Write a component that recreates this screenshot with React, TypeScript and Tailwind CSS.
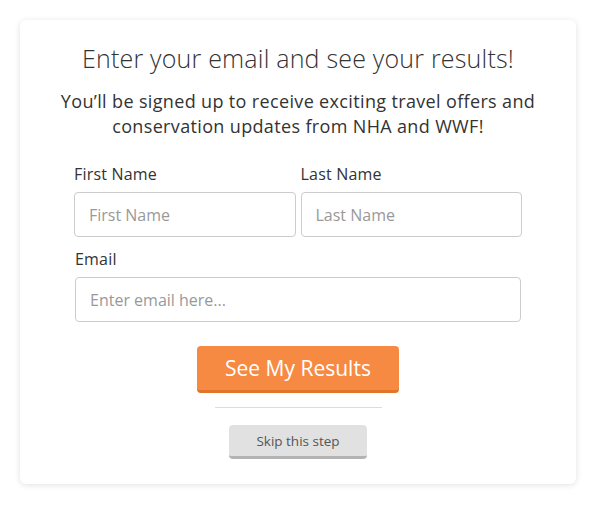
import React from "react";

export default function App() {
  return (
    <div className="w-[600px] h-[507px] bg-white pt-5 pl-5" style={{ fontFamily: "'Open Sans', Lato, sans-serif" }}>
      <div className="w-[556px] h-[464px] rounded-md bg-white shadow-[0_1px_6px_rgba(0,0,0,0.12)] flex flex-col items-center pt-[23px] px-[54px]">
        <h1 className="text-[25px] leading-[30px] font-light tracking-[0.2px] text-[#333] text-center">Enter your email and see your results!</h1>
        <p className="mt-[16px] whitespace-nowrap text-[18px] leading-[25px] tracking-[0.35px] text-[#333] text-center">
          You’ll be signed up to receive exciting travel offers and<br />conservation updates from NHA and WWF!
        </p>
        <div className="w-full mt-[25px] grid grid-cols-2 gap-x-[5px]">
          <div className="flex flex-col">
            <label className="text-[16px] leading-[20px] tracking-[0.2px] text-[#333]">First Name</label>
            <input placeholder="First Name" className="mt-[8px] h-[45px] border border-[#ccc] rounded-[4px] px-[14px] text-[16px] placeholder:text-[#999] outline-none" />
          </div>
          <div className="flex flex-col">
            <label className="text-[16px] leading-[20px] tracking-[0.2px] text-[#333]">Last Name</label>
            <input placeholder="Last Name" className="mt-[8px] h-[45px] border border-[#ccc] rounded-[4px] px-[14px] text-[16px] placeholder:text-[#999] outline-none" />
          </div>
        </div>
        <div className="w-full flex flex-col mt-[12px] px-px">
          <label className="text-[16px] leading-[20px] tracking-[0.2px] text-[#333]">Email</label>
          <input placeholder="Enter email here..." className="mt-[8px] h-[45px] border border-[#ccc] rounded-[4px] px-[14px] text-[16px] placeholder:text-[#999] outline-none" />
        </div>
        <button className="mt-[24px] w-[202px] h-[47px] bg-[#f78a42] border-b-[3px] border-[#e2732b] rounded-[4px] text-white text-[21px] leading-[28px]">See My Results</button>
        <div className="mt-[14px] w-[167px] h-px bg-[#ddd]" />
        <button className="mt-[17px] w-[138px] h-[34px] bg-[#e1e1e1] border-b-[3px] border-[#b4b4b4] rounded-[4px] text-[#555] text-[13.5px] leading-[18px]">Skip this step</button>
      </div>
    </div>
  );
}
